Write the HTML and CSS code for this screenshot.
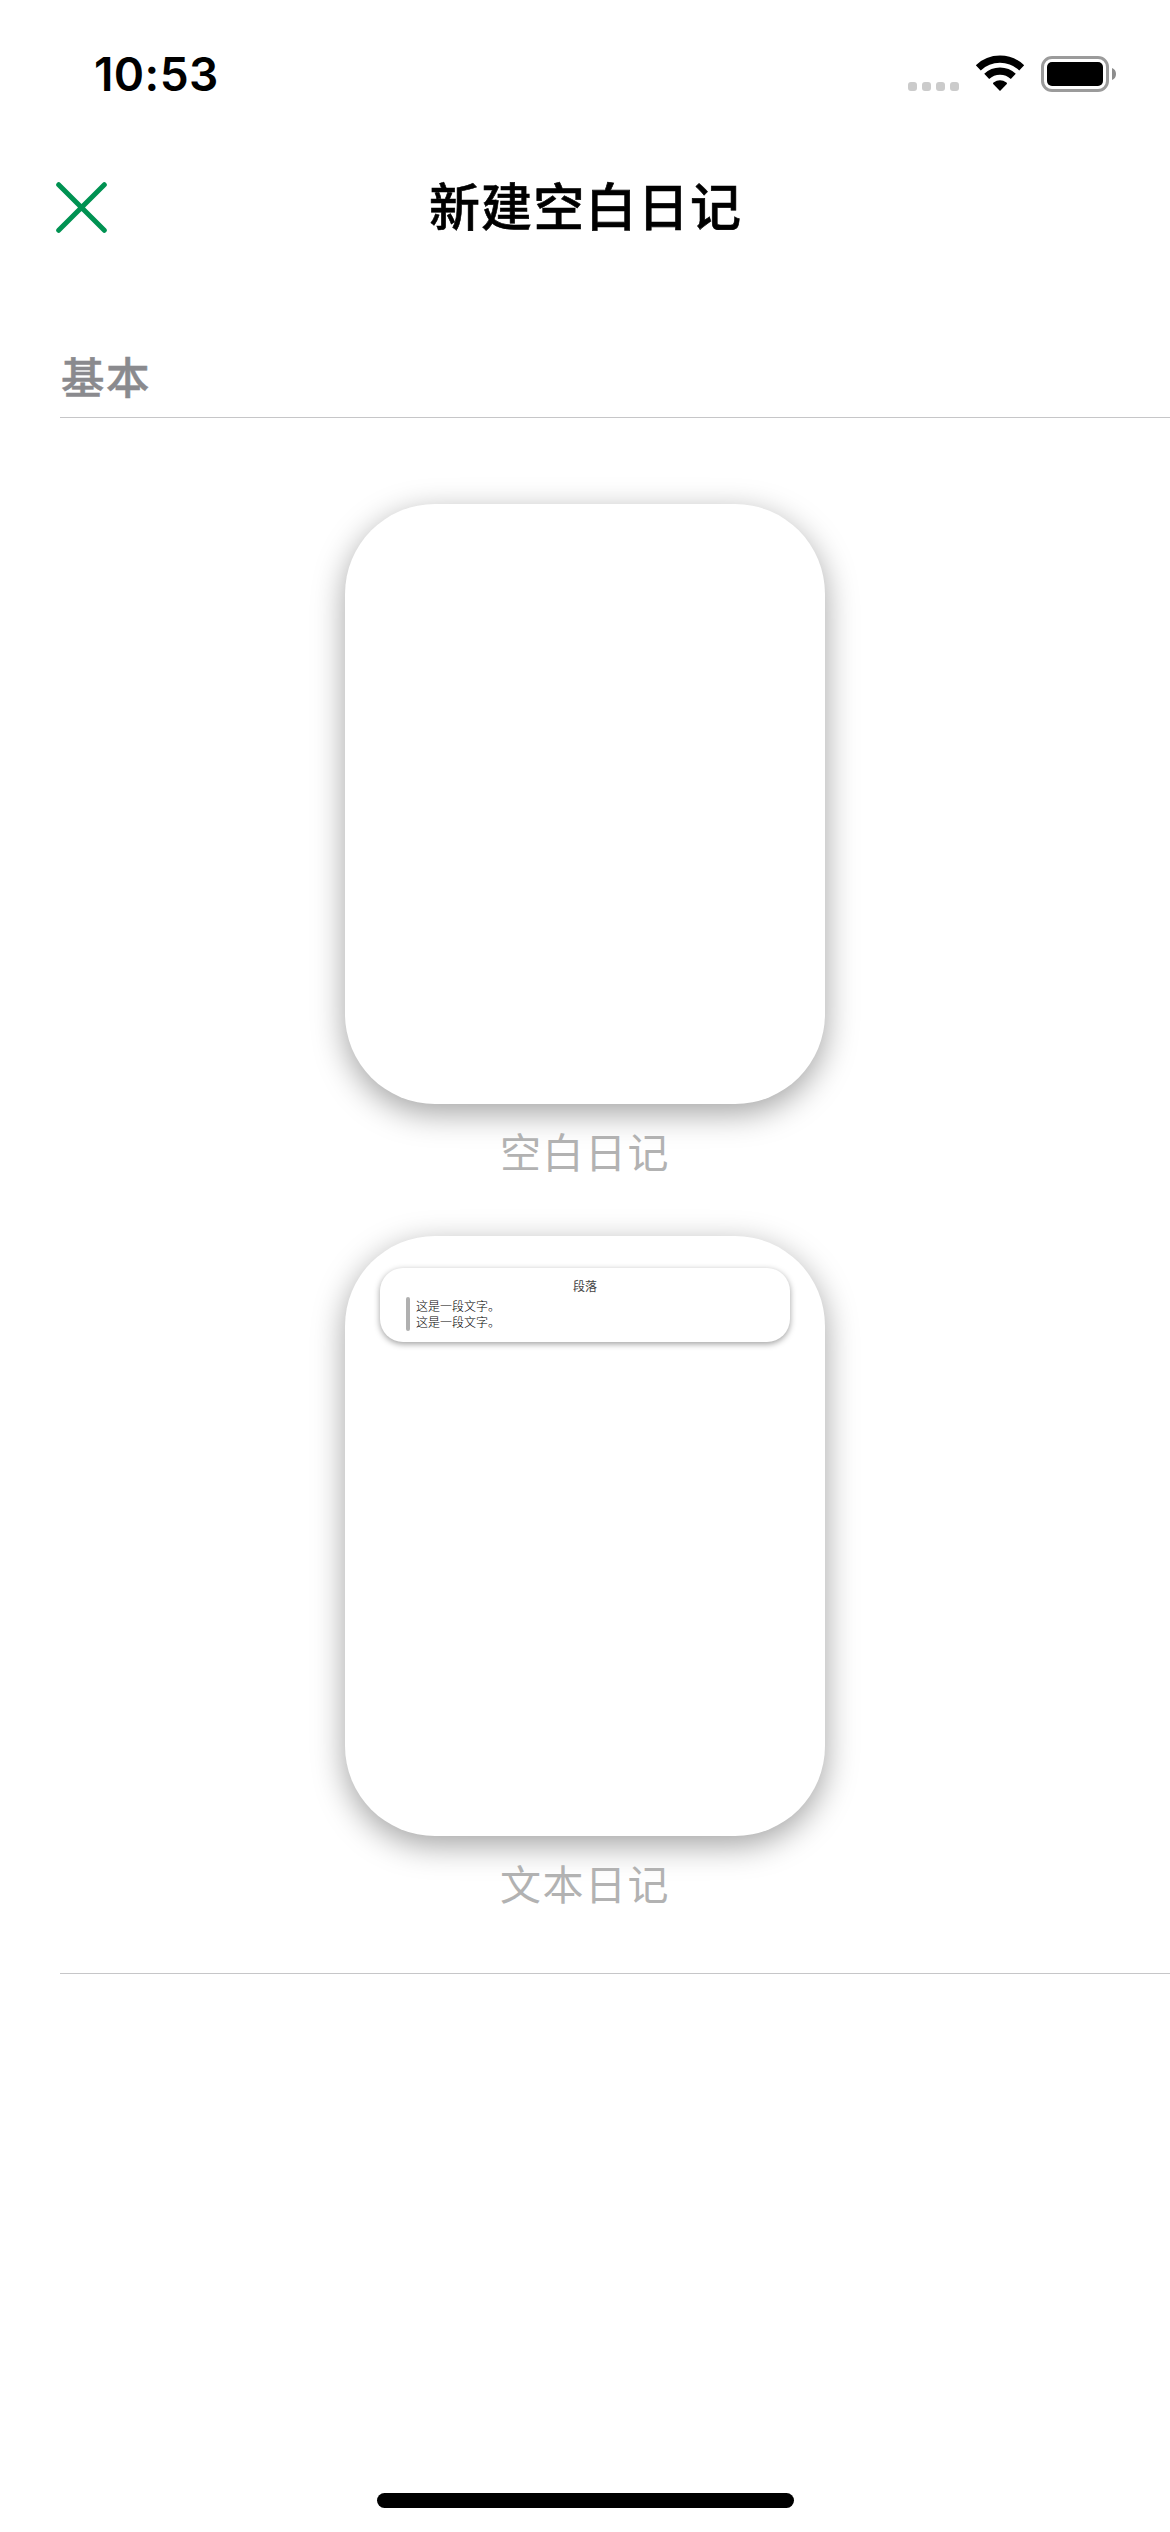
FILE: index.html
```html
<!DOCTYPE html>
<html lang="zh-CN">
<head>
<meta charset="utf-8">
<title>新建空白日记</title>
<link rel="stylesheet" href="styles.css">
</head>
<body>
<div class="status">
  <span class="time">10:53</span>
  <svg class="status-icons" width="210" height="38" viewBox="0 0 210 38">
    <g fill="#cbcbcb">
      <rect x="0" y="27" width="9" height="9" rx="3"/>
      <rect x="14" y="27" width="9" height="9" rx="3"/>
      <rect x="28" y="27" width="9" height="9" rx="3"/>
      <rect x="42" y="27" width="9" height="9" rx="3"/>
    </g>
    <g fill="none" stroke="#000" stroke-width="7.2">
      <path d="M70.3 12.8A31.500 31.500 0 0 1 113.700 12.800"/>
      <path d="M78.700 21.400A19.400 19.400 0 0 1 105.300 21.400"/>
    </g>
    <path d="M92 36L85.200 29.100Q84.600 28.300 85.500 27.600Q92 22.800 98.500 27.600Q99.400 28.300 98.800 29.100Z"/>
    <rect x="134.500" y="2.500" width="65" height="33" rx="9.500" fill="none" stroke="#9b9b9b" stroke-width="3"/>
    <rect x="139" y="7" width="56" height="24" rx="5"/>
    <path d="M204 13Q208 14.500 208 19T204 25Z" fill="#8d8d8d"/>
  </svg>
</div>
<header class="nav">
  <svg class="close" width="51" height="51" viewBox="0 0 51 51"><path d="M2.700 2.700L48.300 48.300M48.300 2.700L2.700 48.300" fill="none" stroke="#009252" stroke-width="5" stroke-linecap="round"/></svg>
  <h1 class="title">新建空白日记</h1>
</header>
<main class="section">
  <h2 class="heading">基本</h2>
  <div class="templates">
    <figure class="template">
      <div class="page"></div>
      <figcaption class="caption">空白日记</figcaption>
    </figure>
    <figure class="template">
      <div class="page">
        <div class="block">
          <div class="block-title">段落</div>
          <div class="quote">这是一段文字。<br>这是一段文字。</div>
        </div>
      </div>
      <figcaption class="caption">文本日记</figcaption>
    </figure>
  </div>
</main>
<div class="home"></div>
</body>
</html>
```
FILE: styles.css
```css
* { box-sizing: border-box; margin: 0; padding: 0; }
body {
  width: 1170px;
  height: 2532px;
  display: flex;
  flex-direction: column;
  background: #fff;
  font-family: "Noto Sans CJK SC", sans-serif;
  overflow: hidden;
}
.status {
  display: flex;
  justify-content: space-between;
  height: 141px;
  padding: 55px 52px 0 94px;
}
.time {
  font: 600 46px/39px Inter, sans-serif;
  letter-spacing: .4px;
  color: #000;
}
.status-icons { display: block; }
.nav {
  display: grid;
  grid-template-columns: 240px 1fr 240px;
  align-items: center;
  height: 132px;
}
.close { margin-left: 56px; }
.title {
  padding: 0 0 7px 1px;
  font-size: 51px;
  font-weight: 500;
  line-height: 72px;
  letter-spacing: 1.2px;
  text-align: center;
  color: #000;
  -webkit-text-stroke: .6px #000;
}
.section {
  margin-left: 60px;
  padding-top: 73px;
  height: 1701px;
  border-bottom: 1px solid #c6c6c8;
}
.heading {
  height: 72px;
  padding-left: 1px;
  border-bottom: 1px solid #c6c6c8;
  font-size: 43.5px;
  font-weight: 500;
  line-height: 60px;
  letter-spacing: 1.500px;
  color: #8a8a8e;
  -webkit-text-stroke: .5px #8a8a8e;
}
.templates {
  display: flex;
  flex-direction: column;
  align-items: center;
  gap: 52px;
  padding: 86px 60px 0 0;
}
.template { width: 480px; height: 680px; }
.page {
  height: 600px;
  padding: 32px 35px;
  border-radius: 90px;
  background: #fff;
  box-shadow: 0 9px 32px rgba(0, 0, 0, .37);
}
.caption {
  padding-top: 15px;
  font-size: 41px;
  font-weight: 400;
  line-height: 62px;
  letter-spacing: 1.500px;
  text-align: center;
  color: #b2b2b2;
}
.block {
  height: 74px;
  padding: 9px 26px 0;
  border-radius: 23px;
  background: #fff;
  box-shadow: 0 2px 6px rgba(0, 0, 0, .38);
}
.block-title {
  height: 20px;
  font-size: 12px;
  line-height: 18px;
  text-align: center;
  color: #444;
}
.quote {
  position: relative;
  height: 34px;
  padding: 1px 0 0 10px;
  font-size: 12px;
  font-weight: 300;
  line-height: 16px;
  color: #000;
}
.quote::before {
  content: "";
  position: absolute;
  left: 0;
  top: 0;
  width: 4px;
  height: 34px;
  border-radius: 2px;
  background: #b0b0b0;
}
.home {
  width: 417px;
  height: 15px;
  margin: auto auto 24px;
  border-radius: 8px;
  background: #000;
}
```
